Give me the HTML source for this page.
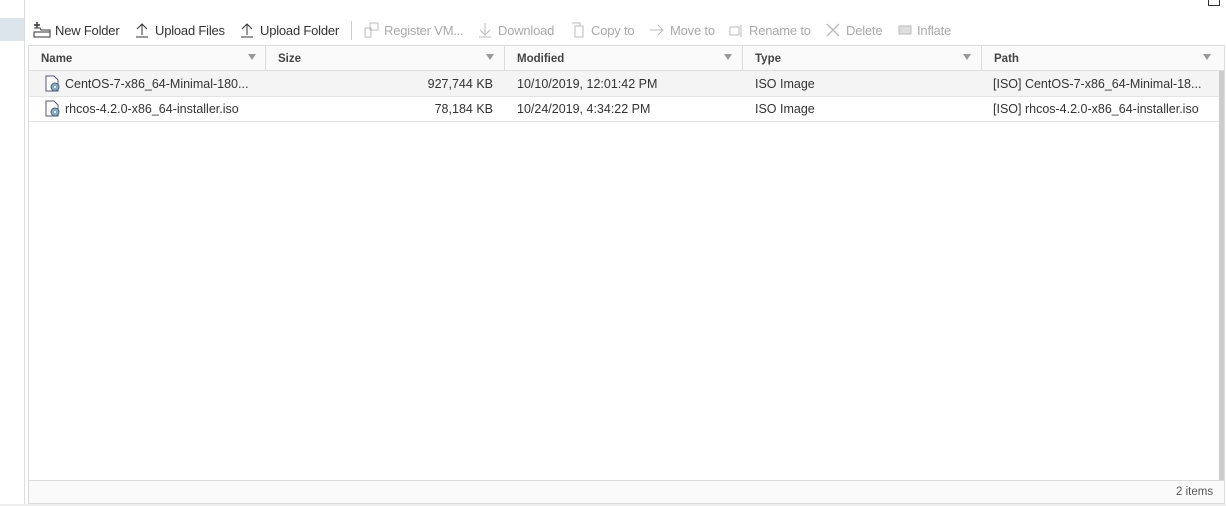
<!DOCTYPE html><html><head><style>
body{margin:0;width:1226px;height:506px;background:#fff;font-family:"Liberation Sans",sans-serif;font-size:12px;color:#333;position:relative;overflow:hidden}
.a{position:absolute}
.tb{position:absolute;top:23px;font-size:13px;color:#333;white-space:nowrap;letter-spacing:-0.2px}
.dis{color:#aaa}
.hd{position:absolute;top:47px;height:24px;line-height:24px;font-weight:bold;font-size:11.5px;color:#444}
.f{position:absolute;top:54px;width:0;height:0;border-left:4px solid transparent;border-right:4px solid transparent;border-top:6px solid #999}
.c{position:absolute;line-height:25px;font-size:12.5px;white-space:nowrap}
</style></head><body>
<div class="a" style="left:0;top:0;width:24px;height:504px;border-right:1px solid #ddd;background:#fff"></div>
<div class="a" style="left:0;top:18px;width:24px;height:23px;background:#dde5ec"></div>
<div class="a" style="left:1208px;top:-4px;width:10px;height:8px;border:1px solid #333"></div>
<div class="a" style="left:0;top:504px;width:1226px;height:2px;background:#eee"></div>
<svg class="a" style="left:33px;top:22px" width="18" height="16"><path d="M1 10h16V15H1z M1 6h6l1 2h9v2" fill="none" stroke="#333"/><path d="M4 0v6M1 3h6" stroke="#333" stroke-width="1.4"/></svg>
<div class="tb" style="left:55px">New Folder</div>
<svg class="a" style="left:135px;top:22px" width="14" height="16"><path d="M7 2v11M2 7l5-5 5 5M1 15h12" fill="none" stroke="#333"/></svg>
<div class="tb" style="left:155px">Upload Files</div>
<svg class="a" style="left:240px;top:22px" width="14" height="16"><path d="M7 2v11M2 7l5-5 5 5M1 15h12" fill="none" stroke="#333"/></svg>
<div class="tb" style="left:260px">Upload Folder</div>
<div class="a" style="left:351px;top:21px;width:1px;height:19px;background:#ccc"></div>
<svg class="a" style="left:364px;top:22px" width="16" height="16"><path d="M6 1h8v7H6z M1 6h6v9H1z" fill="none" stroke="#bbb"/></svg>
<div class="tb dis" style="left:384px">Register VM...</div>
<svg class="a" style="left:478px;top:22px" width="14" height="16"><path d="M7 1v12M2 8l5 5 5-5M1 15h12" fill="none" stroke="#bbb"/></svg>
<div class="tb dis" style="left:498px">Download</div>
<svg class="a" style="left:571px;top:22px" width="14" height="16"><path d="M4 4h8v11H4z M1 1h8v3" fill="none" stroke="#bbb"/></svg>
<div class="tb dis" style="left:591px">Copy to</div>
<svg class="a" style="left:649px;top:22px" width="16" height="16"><path d="M1 8h13M9 3l5 5-5 5" fill="none" stroke="#bbb"/></svg>
<div class="tb dis" style="left:670px">Move to</div>
<svg class="a" style="left:729px;top:22px" width="16" height="16"><path d="M1 5h9v8H1z M12 3v12" fill="none" stroke="#bbb"/></svg>
<div class="tb dis" style="left:749px">Rename to</div>
<svg class="a" style="left:826px;top:23px" width="14" height="14"><path d="M1 1l12 12M13 1L1 13" stroke="#bbb" stroke-width="1.3"/></svg>
<div class="tb dis" style="left:846px">Delete</div>
<svg class="a" style="left:897px;top:23px" width="16" height="14"><path d="M2 3h12v8H2z" fill="#ddd" stroke="#bbb"/></svg>
<div class="tb dis" style="left:917px">Inflate</div>

<div class="a" style="left:28px;top:45px;width:1195px;height:457px;border:1px solid #ddd"></div>
<div class="a" style="left:29px;top:46px;width:1195px;height:24px;background:#fafafa;border-bottom:1px solid #ddd"></div>
<div class="a" style="left:29px;top:71px;width:1190px;height:25px;background:#f4f4f4;border-bottom:1px solid #e4e4e4"></div>
<div class="a" style="left:29px;top:96px;width:1190px;height:25px;border-bottom:1px solid #e4e4e4"></div>
<div class="a" style="left:1219px;top:71px;width:5px;height:409px;background:#ccc"></div>
<div class="a" style="left:29px;top:480px;width:1195px;height:22px;background:#fafafa;border-top:1px solid #ddd"></div>
<div class="a" style="left:1176px;top:486px;font-size:11.5px;color:#555">2 items</div>
<div class="a" style="left:265px;top:46px;width:1px;height:24px;background:#ddd"></div>
<div class="a" style="left:504px;top:46px;width:1px;height:24px;background:#ddd"></div>
<div class="a" style="left:742px;top:46px;width:1px;height:24px;background:#ddd"></div>
<div class="a" style="left:981px;top:46px;width:1px;height:24px;background:#ddd"></div>
<div class="hd" style="left:41px">Name</div><div class="f" style="left:248px"></div>
<div class="hd" style="left:278px">Size</div><div class="f" style="left:486px"></div>
<div class="hd" style="left:517px">Modified</div><div class="f" style="left:724px"></div>
<div class="hd" style="left:755px">Type</div><div class="f" style="left:963px"></div>
<div class="hd" style="left:994px">Path</div><div class="f" style="left:1203px"></div>

<svg class="a" style="left:45px;top:75px" width="16" height="17"><path d="M1 1h8l4 4v11H1z" fill="#fff" stroke="#557"/><circle cx="10" cy="12" r="4" fill="#8ab" stroke="#468"/><circle cx="10" cy="12" r="1" fill="#fff"/></svg>
<svg class="a" style="left:45px;top:100px" width="16" height="17"><path d="M1 1h8l4 4v11H1z" fill="#fff" stroke="#557"/><circle cx="10" cy="12" r="4" fill="#8ab" stroke="#468"/><circle cx="10" cy="12" r="1" fill="#fff"/></svg>
<div class="c" style="left:65px;top:72px">CentOS-7-x86_64-Minimal-180...</div>
<div class="c" style="left:65px;top:97px">rhcos-4.2.0-x86_64-installer.iso</div>
<div class="c" style="right:733px;top:72px">927,744 KB</div>
<div class="c" style="right:733px;top:97px">78,184 KB</div>
<div class="c" style="left:517px;top:72px">10/10/2019, 12:01:42 PM</div>
<div class="c" style="left:517px;top:97px">10/24/2019, 4:34:22 PM</div>
<div class="c" style="left:755px;top:72px">ISO Image</div>
<div class="c" style="left:755px;top:97px">ISO Image</div>
<div class="c" style="left:993px;top:72px">[ISO] CentOS-7-x86_64-Minimal-18...</div>
<div class="c" style="left:993px;top:97px">[ISO] rhcos-4.2.0-x86_64-installer.iso</div>
</body></html>
